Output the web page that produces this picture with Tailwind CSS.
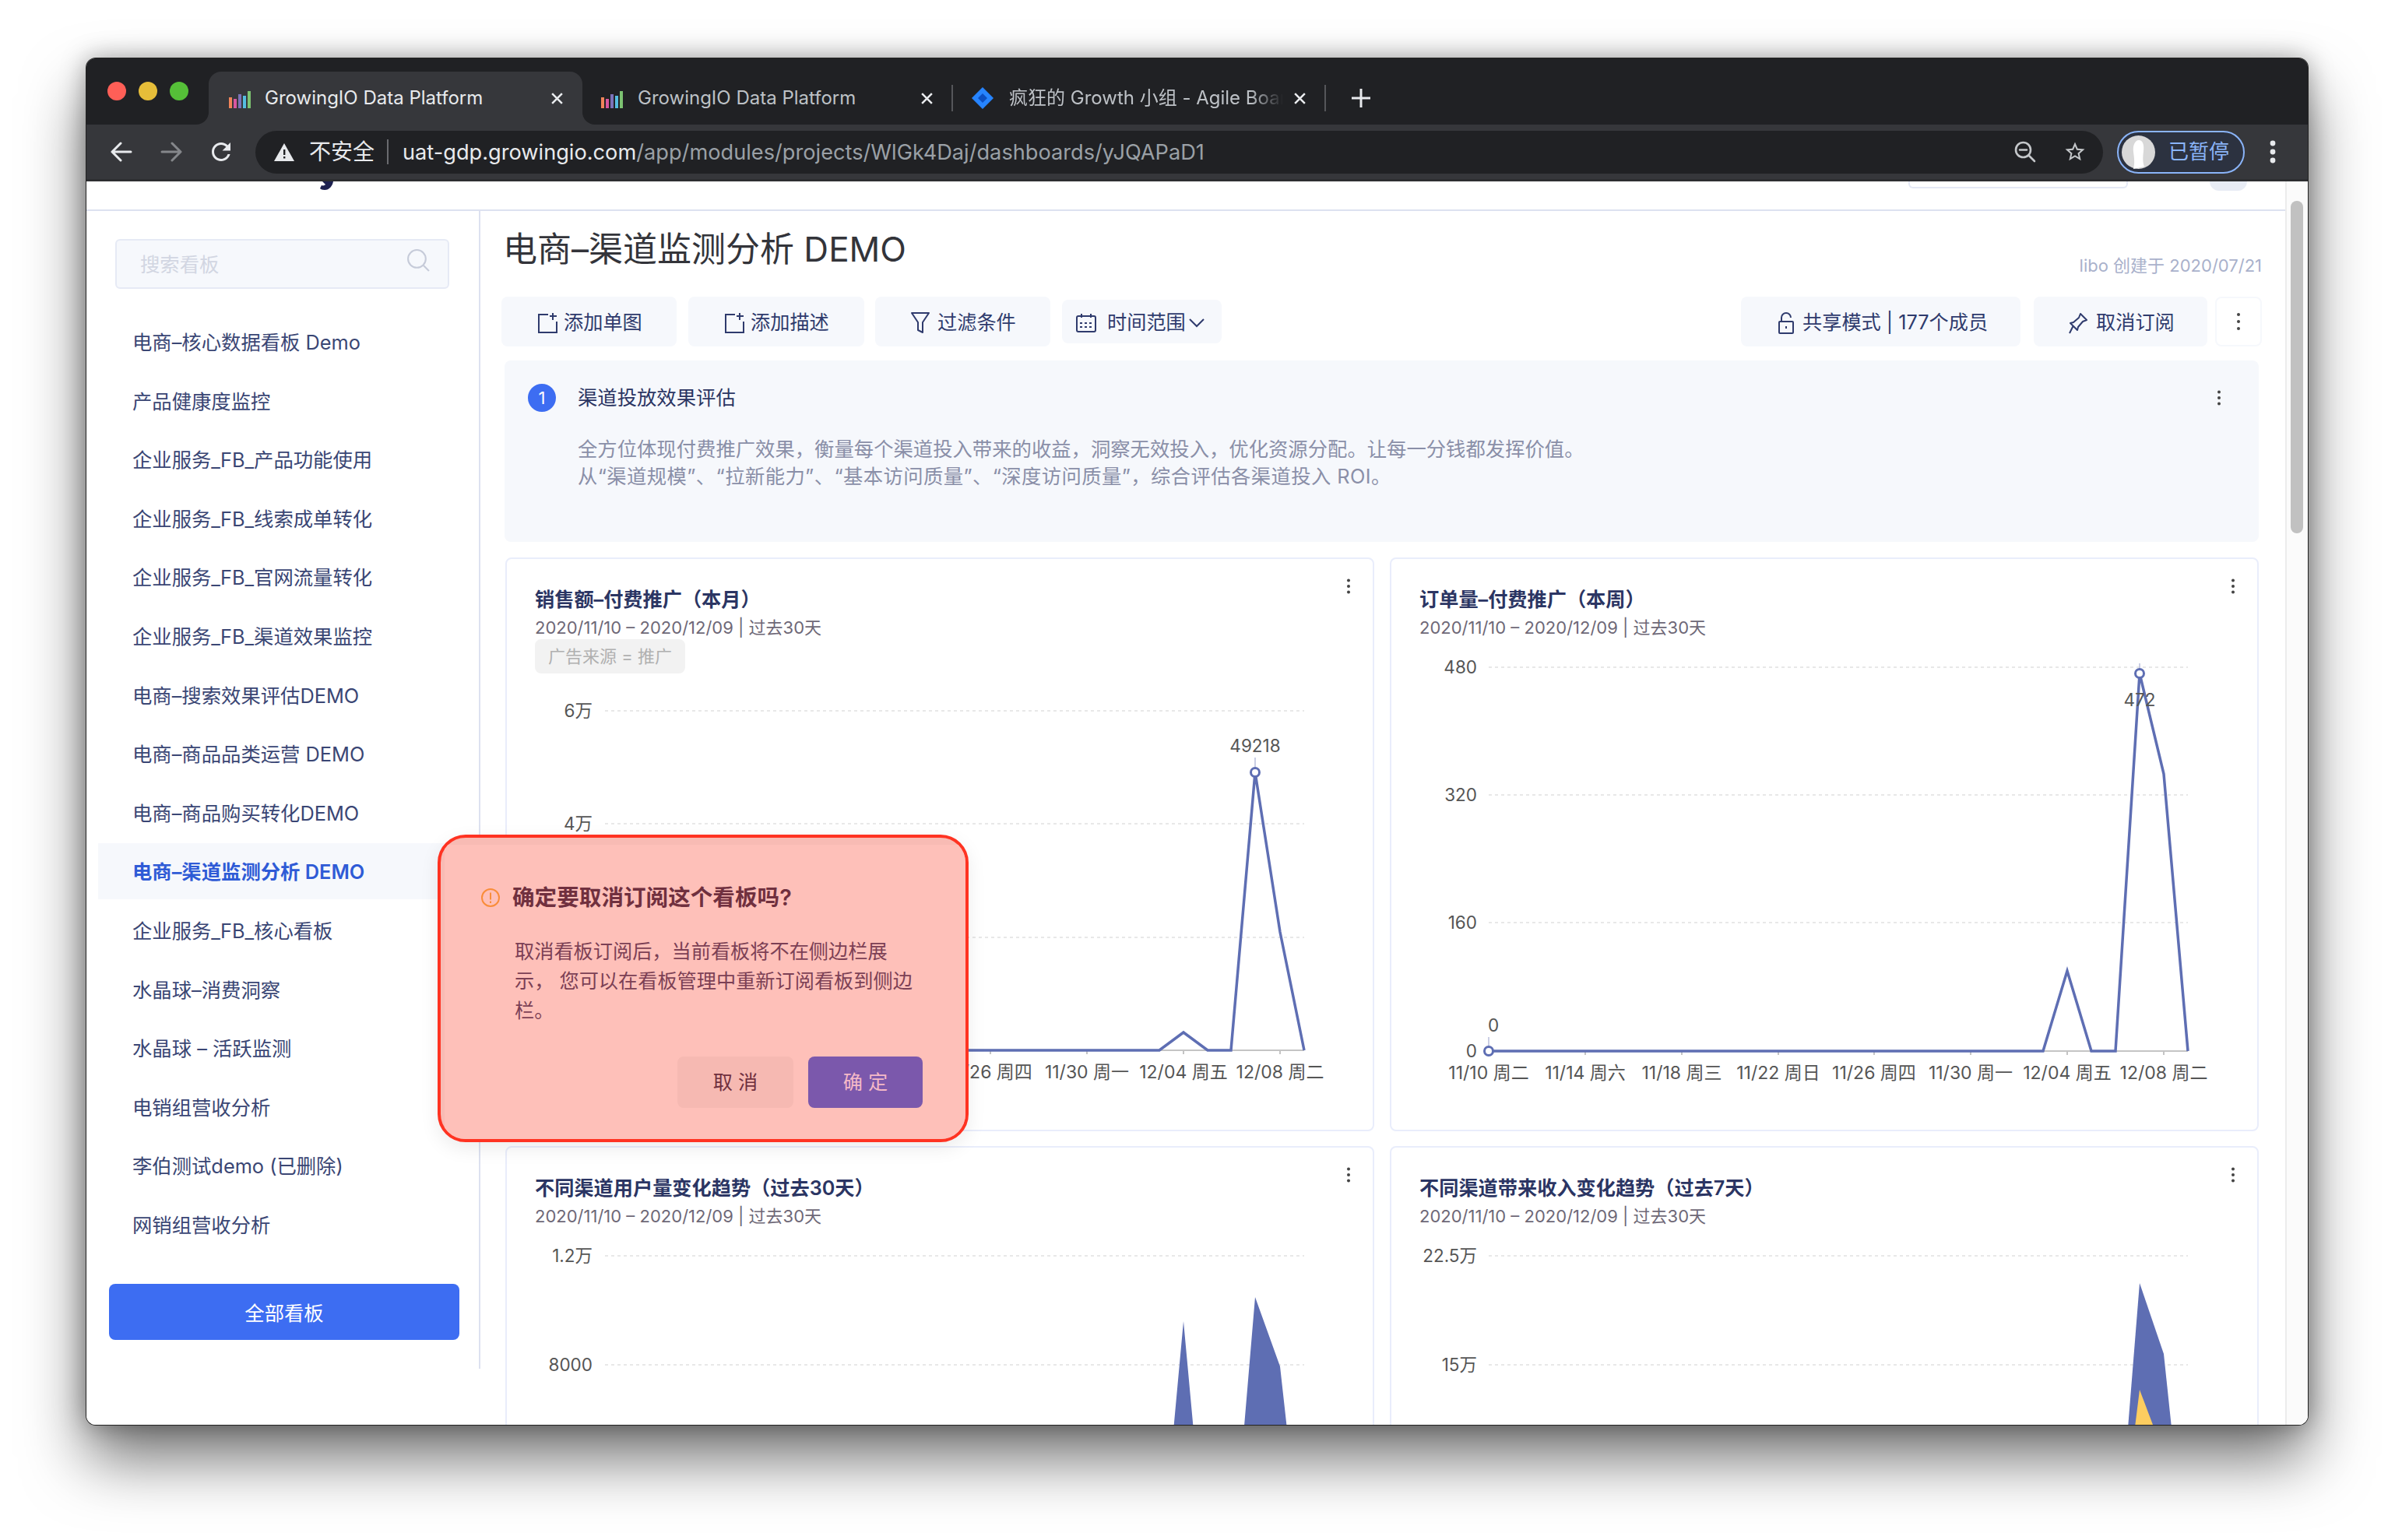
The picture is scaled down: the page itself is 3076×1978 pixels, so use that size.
<!DOCTYPE html>
<html lang="zh-CN">
<head>
  <meta charset="UTF-8">
  <title>GrowingIO Data Platform</title>
  <script src="https://cdn.jsdelivr.net/npm/@tailwindcss/browser@4"></script>
</head>
<body class="bg-white font-['Inter','Noto_Sans_CJK_SC',sans-serif] pt-[75px] pl-[111px] h-[1978px] overflow-hidden">

  <!-- browser window -->
  <div class="relative w-[2853px] h-[1755px] rounded-[12px] flex flex-col shadow-[0_0_0_1px_#222,0_0_32px_rgba(0,0,0,0.35),0_44px_80px_rgba(0,0,0,0.55)]">

    <!-- tab strip -->
    <div class="flex h-[85px] bg-[#36373b] rounded-t-[12px] overflow-hidden">
      <div class="w-[157px] bg-[#202124] rounded-br-[16px] flex items-center gap-[16px] pl-[27px] pb-[2px]">
        <span class="w-[24px] h-[24px] rounded-full bg-[#ff5f57]"></span>
        <span class="w-[24px] h-[24px] rounded-full bg-[#e6bd39]"></span>
        <span class="w-[24px] h-[24px] rounded-full bg-[#55bf38]"></span>
      </div>
      <div class="w-[480px] bg-[#202124] pt-[17px]">
        <div class="h-[68px] bg-[#36373b] rounded-t-[16px] flex items-center pl-[26px] pr-[24px] text-[#e8eaed]">
          <svg class="w-[28px] h-[22px] mt-[4px]" viewBox="0 0 28 22"><rect y="8" width="4" height="14" fill="#f0845a"/><rect x="6" y="10" width="4" height="12" fill="#d9569f"/><rect x="12" y="4" width="4" height="18" fill="#7c72b8"/><rect x="18" y="6" width="4" height="16" fill="#55bde0"/><rect x="24" width="4" height="22" fill="#7cc271"/></svg>
          <span class="ml-[18px] flex-1 text-[24px] leading-none">GrowingIO Data Platform</span>
          <svg class="w-[17px] h-[17px]" viewBox="0 0 16 16" stroke="#e8eaed" stroke-width="2.4"><path d="M2 2l12 12M14 2L2 14"/></svg>
        </div>
      </div>
      <div class="flex-1 bg-[#202124] rounded-bl-[16px] pt-[17px] flex items-center text-[#bdc1c6]">
        <div class="w-[476px] flex items-center pl-[24px] pr-[23px] border-r-2 border-[#55565a] h-[34px]">
          <svg class="w-[28px] h-[22px] mt-[4px]" viewBox="0 0 28 22"><rect y="8" width="4" height="14" fill="#f0845a"/><rect x="6" y="10" width="4" height="12" fill="#d9569f"/><rect x="12" y="4" width="4" height="18" fill="#7c72b8"/><rect x="18" y="6" width="4" height="16" fill="#55bde0"/><rect x="24" width="4" height="22" fill="#7cc271"/></svg>
          <span class="ml-[19px] flex-1 text-[24px] leading-none">GrowingIO Data Platform</span>
          <svg class="w-[17px] h-[17px]" viewBox="0 0 16 16" stroke="#e8eaed" stroke-width="2.4"><path d="M2 2l12 12M14 2L2 14"/></svg>
        </div>
        <div class="w-[479px] flex items-center pl-[23px] pr-[23px] border-r-2 border-[#55565a] h-[34px]">
          <svg class="w-[30px] h-[30px]" viewBox="0 0 30 30"><path d="M15 1L29 15 15 29 1 15z" fill="#2684ff"/><path d="M15 9l6 6-6 6-6-6z" fill="#0b4fc2"/></svg>
          <span class="ml-[19px] w-[352px] whitespace-nowrap overflow-hidden text-[24px] leading-[30px] [mask-image:linear-gradient(to_right,#000_88%,transparent)]">疯狂的 Growth 小组 - Agile Board - Jira</span>
          <span class="flex-1"></span>
          <svg class="w-[17px] h-[17px]" viewBox="0 0 16 16" stroke="#e8eaed" stroke-width="2.4"><path d="M2 2l12 12M14 2L2 14"/></svg>
        </div>
        <svg class="ml-[33px] w-[24px] h-[24px]" viewBox="0 0 24 24" stroke="#e8eaed" stroke-width="3"><path d="M12 0v24M0 12h24"/></svg>
      </div>
    </div>

    <!-- toolbar -->
    <div class="h-[73px] bg-[#36373b] border-b-[3px] border-[#2d2e31] flex items-center">
      <svg class="ml-[31px] w-[28px] h-[26px]" viewBox="0 0 28 26" fill="none" stroke="#e8eaed" stroke-width="3" stroke-linecap="round" stroke-linejoin="round"><path d="M26 13H2M13 2L2 13l11 11"/></svg>
      <svg class="ml-[36px] w-[28px] h-[26px]" viewBox="0 0 28 26" fill="none" stroke="#85878b" stroke-width="3" stroke-linecap="round" stroke-linejoin="round"><path d="M2 13h24M15 2l11 11-11 11"/></svg>
      <svg class="ml-[32px] w-[36px] h-[36px]" viewBox="0 0 24 24" fill="#e8eaed"><path d="M17.65 6.35C16.2 4.9 14.21 4 12 4c-4.42 0-7.99 3.58-7.99 8s3.57 8 7.99 8c3.73 0 6.84-2.55 7.73-6h-2.08c-.82 2.33-3.04 4-5.65 4-3.31 0-6-2.69-6-6s2.69-6 6-6c1.66 0 3.14.69 4.22 1.78L13 11h7V4l-2.35 2.35z"/></svg>
      <div class="ml-[26px] w-[2373px] h-[55px] rounded-full bg-[#202124] flex items-center pl-[24px] pr-[21px]">
        <svg class="w-[26px] h-[23px]" viewBox="0 0 26 23"><path d="M13 0l13 23H0z" fill="#e8eaed"/><path d="M12 8h2.4v7H12zM12 17h2.4v2.6H12z" fill="#202124"/></svg>
        <span class="ml-[19px] text-[28px] leading-none text-[#e8eaed]">不安全</span>
        <span class="ml-[16px] w-[2px] h-[32px] bg-[#6a6b6f]"></span>
        <span class="ml-[18px] pt-[2px] text-[27.2px] leading-none text-[#e8eaed] whitespace-nowrap">uat-gdp.growingio.com<span class="text-[#9aa0a6]">/app/modules/projects/WlGk4Daj/dashboards/yJQAPaD1</span></span>
        <span class="flex-1"></span>
        <svg class="w-[28px] h-[28px]" viewBox="0 0 28 28" fill="none" stroke="#c4c7ca" stroke-width="2.6" stroke-linecap="round"><circle cx="11.5" cy="11.5" r="9.5"/><path d="M18.5 18.5L26 26M7 11.5h9"/></svg>
        <svg class="ml-[35px] w-[30px] h-[30px]" viewBox="0 0 24 24" fill="#c4c7ca"><path d="M22 9.24l-7.19-.62L12 2 9.19 8.63 2 9.24l5.46 4.73L5.82 21 12 17.27 18.18 21l-1.63-7.03L22 9.24zM12 15.4l-3.76 2.27 1-4.28-3.32-2.88 4.38-.38L12 6.1l1.71 4.04 4.38.38-3.32 2.88 1 4.28L12 15.4z"/></svg>
      </div>
      <div class="ml-[18px] w-[164px] h-[55px] rounded-full border-2 border-[#8ab4f8] bg-[#2c3240] flex items-center pl-[4px]">
        <svg class="w-[43px] h-[43px]" viewBox="0 0 43 43"><circle cx="21.5" cy="21.5" r="21.5" fill="#d8d8d8"/><path d="M15 43c2-8 1-14 0-22-1-8 2-15 7-15s7 6 6 14c-1 8-1 15 1 20z" fill="#fff"/></svg>
        <span class="ml-[17px] text-[26px] leading-none text-[#8ab4f8]">已暂停</span>
      </div>
      <svg class="ml-[32px] w-[8px] h-[30px]" viewBox="0 0 8 30" fill="#e8eaed"><circle cx="4" cy="4" r="3.4"/><circle cx="4" cy="15" r="3.4"/><circle cx="4" cy="26" r="3.4"/></svg>
    </div>

    <!-- page -->
    <div class="flex-1 flex min-h-0 bg-white rounded-b-[12px] overflow-hidden">
      <div class="flex-1 flex flex-col min-w-0">

        <!-- what is left of the scrolled header -->
        <div class="h-[38px] border-b-2 border-[#dde1f0] flex items-start shrink-0">
          <svg class="ml-[298px] w-[20px] h-[11px]" viewBox="0 0 20 11"><path d="M5 0h14c-1 6-5 11-11 11-3 0-5-1-6-2l2-4c2 1 4 0 5-1z" fill="#1d2150"/></svg>
          <div class="ml-[2022px] w-[282px] h-[9px] border-2 border-t-0 border-[#e4e8f5] rounded-b-[6px]"></div>
          <div class="ml-[105px] w-[48px] h-[12px] rounded-b-full bg-[#e8ecf5]"></div>
        </div>

        <div class="flex-1 flex min-h-0">
          <!-- sidebar -->
          <aside class="w-[506px] h-[1487px] shrink-0 border-r-2 border-[#dde1f0] flex flex-col">
            <div class="mt-[36px] ml-[37px] w-[429px] h-[64px] rounded-[6px] border-2 border-[#e6eaf5] bg-[#f6f8fc] flex items-center pl-[30px] pr-[22px] justify-between">
              <span class="text-[25.35px] pt-[3px] text-[#d2d6e2]">搜索看板</span>
              <svg class="w-[31px] h-[31px] mb-[10px]" viewBox="0 0 30 30" fill="none" stroke="#c6cbd9" stroke-width="2"><circle cx="13" cy="13" r="11"/><path d="M21 21l7 7"/></svg>
            </div>
            <nav class="mt-[32px] ml-[15px] flex flex-col gap-[3.6px] text-[25.35px] text-[#3a4674]">
              <a class="h-[72px] pl-[44px] pt-[2px] flex items-center">电商–核心数据看板 Demo</a>
              <a class="h-[72px] pl-[44px] pt-[2px] flex items-center">产品健康度监控</a>
              <a class="h-[72px] pl-[44px] pt-[2px] flex items-center">企业服务_FB_产品功能使用</a>
              <a class="h-[72px] pl-[44px] pt-[2px] flex items-center">企业服务_FB_线索成单转化</a>
              <a class="h-[72px] pl-[44px] pt-[2px] flex items-center">企业服务_FB_官网流量转化</a>
              <a class="h-[72px] pl-[44px] pt-[2px] flex items-center">企业服务_FB_渠道效果监控</a>
              <a class="h-[72px] pl-[44px] pt-[2px] flex items-center">电商–搜索效果评估DEMO</a>
              <a class="h-[72px] pl-[44px] pt-[2px] flex items-center">电商–商品品类运营 DEMO</a>
              <a class="h-[72px] pl-[44px] pt-[2px] flex items-center">电商–商品购买转化DEMO</a>
              <a class="h-[72px] pl-[44px] pt-[2px] flex items-center bg-[#f6f8fc] font-semibold text-[#2f5bd6]">电商–渠道监测分析 DEMO</a>
              <a class="h-[72px] pl-[44px] pt-[2px] flex items-center">企业服务_FB_核心看板</a>
              <a class="h-[72px] pl-[44px] pt-[2px] flex items-center">水晶球–消费洞察</a>
              <a class="h-[72px] pl-[44px] pt-[2px] flex items-center">水晶球 – 活跃监测</a>
              <a class="h-[72px] pl-[44px] pt-[2px] flex items-center">电销组营收分析</a>
              <a class="h-[72px] pl-[44px] pt-[2px] flex items-center">李伯测试demo (已删除)</a>
              <a class="h-[72px] pl-[44px] pt-[2px] flex items-center">网销组营收分析</a>
            </nav>
            <button class="mt-[40px] ml-[29px] w-[450px] h-[72px] rounded-[8px] bg-[#3d6df2] text-white text-[25.35px] pt-[4px]">全部看板</button>
          </aside>

          <!-- main -->
          <main class="flex-1 min-w-0 pl-[27px] pr-[30px] overflow-hidden">
            <div class="h-[60px] mt-[19px] ml-[2px] flex justify-between items-end">
              <h1 class="text-[44px] leading-[60px] text-[#33343a]">电商–渠道监测分析 DEMO</h1>
              <span class="text-[22px] leading-[30px] -mb-[6px] text-[#a9b1cb]">libo 创建于 2020/07/21</span>
            </div>

            <!-- toolbar buttons -->
            <div class="mt-[31px] flex items-center text-[25.2px] text-[#2f3b6d]">
              <button class="w-[225px] h-[64px] rounded-[8px] bg-[#f6f8fc] flex items-center pl-[46px] pt-[3px]">
                <svg class="w-[26px] h-[27px] mr-[8px]" viewBox="0 0 26 27" fill="none" stroke="#2f3b6d" stroke-width="2"><path d="M14 3H2v23h23V12M20 1v9M16 5h9"/></svg>添加单图</button>
              <button class="ml-[15px] w-[226px] h-[64px] rounded-[8px] bg-[#f6f8fc] flex items-center pl-[46px] pt-[3px]">
                <svg class="w-[26px] h-[27px] mr-[8px]" viewBox="0 0 26 27" fill="none" stroke="#2f3b6d" stroke-width="2"><path d="M14 3H2v23h23V12M20 1v9M16 5h9"/></svg>添加描述</button>
              <button class="ml-[14px] w-[225px] h-[64px] rounded-[8px] bg-[#f6f8fc] flex items-center pl-[46px] pt-[3px]">
                <svg class="w-[24px] h-[27px] mr-[10px]" viewBox="0 0 24 27" fill="none" stroke="#2f3b6d" stroke-width="2" stroke-linejoin="round"><path d="M1 1h22l-8 12v13l-6-3V13z"/></svg>过滤条件</button>
              <button class="ml-[15px] w-[205px] h-[56px] rounded-[8px] bg-[#f6f8fc] flex items-center pl-[18px] pt-[3px]">
                <svg class="w-[26px] h-[24px] mr-[14px]" viewBox="0 0 26 24" fill="none" stroke="#2f3b6d" stroke-width="2"><rect x="1" y="3" width="24" height="20" rx="2"/><path d="M7 0v5M19 0v5"/><path d="M5 12h16M5 17h16" stroke-dasharray="3 3"/></svg>时间范围
                <svg class="ml-[4px] w-[20px] h-[12px]" viewBox="0 0 20 12" fill="none" stroke="#2f3b6d" stroke-width="2"><path d="M1 1l9 9 9-9"/></svg></button>
              <span class="flex-1"></span>
              <button class="w-[359px] h-[64px] rounded-[8px] bg-[#f6f8fc] flex items-center pl-[47px] pt-[3px]">
                <svg class="w-[22px] h-[28px] mr-[10px]" viewBox="0 0 22 28" fill="none" stroke="#2f3b6d" stroke-width="2"><rect x="2" y="12" width="18" height="15" rx="1"/><path d="M5 12V7a6 6 0 0 1 12 0M11 18v3"/></svg>共享模式 | 177个成员</button>
              <button class="ml-[17px] w-[223px] h-[64px] rounded-[8px] bg-[#f6f8fc] flex items-center pl-[44px] pt-[3px]">
                <svg class="w-[26px] h-[28px] mr-[10px]" viewBox="0 0 26 28" fill="none" stroke="#2f3b6d" stroke-width="2" stroke-linejoin="round"><path d="M16 2l8 8-5 2-6 7-1 4-9-9 4-1 7-6zM7 17l-5 10"/></svg>取消订阅</button>
              <button class="ml-[10px] w-[60px] h-[64px] rounded-[8px] border-2 border-[#f6f8fc] flex items-center justify-center">
                <svg class="w-[6px] h-[24px]" viewBox="0 0 6 24" fill="#444"><circle cx="3" cy="3" r="2"/><circle cx="3" cy="12" r="2"/><circle cx="3" cy="21" r="2"/></svg></button>
            </div>

            <!-- description panel -->
            <section class="mt-[18px] ml-[4px] mr-[4px] h-[233px] rounded-[8px] bg-[#f6f8fc] pt-[30px] pl-[30px] pr-[48px]">
              <div class="flex items-center h-[36px]">
                <span class="w-[36px] h-[36px] rounded-full bg-[#3d6df2] text-white text-[22px] flex items-center justify-center">1</span>
                <span class="ml-[28px] text-[25.35px] text-[#2b3563]">渠道投放效果评估</span>
                <span class="flex-1"></span>
                <svg class="w-[6px] h-[20px]" viewBox="0 0 6 20" fill="#444"><circle cx="3" cy="2.5" r="2"/><circle cx="3" cy="10" r="2"/><circle cx="3" cy="17.5" r="2"/></svg>
              </div>
              <p class="mt-[30px] ml-[64px] text-[25.35px] leading-[35px] text-[#8a8fa8]">全方位体现付费推广效果，衡量每个渠道投入带来的收益，洞察无效投入，优化资源分配。让每一分钱都发挥价值。<br><span class="tracking-[0.4px]">从“渠道规模”、“拉新能力”、“基本访问质量”、“深度访问质量”，综合评估各渠道投入 ROI。</span></p>
            </section>

            <!-- charts -->
            <div class="mt-[20px] ml-[5px] mr-[4px] grid grid-cols-[1116px_1116px] gap-x-[20px] gap-y-[19px]">

              <div class="h-[737px] rounded-[8px] border-2 border-[#e9edfb] overflow-hidden">
                <div class="h-[152px] flex justify-between pl-[36px] pr-[28px]">
                  <div class="pt-[34px]">
                    <h3 class="text-[25.2px] leading-[36px] font-semibold text-[#2b3563]">销售额–付费推广（本月）</h3>
                    <p class="mt-[3px] text-[22px] leading-[30px] text-[#6e6877]">2020/11/10 – 2020/12/09 | 过去30天</p>
                    <span class="inline-block h-[44px] w-[193px] rounded-[8px] bg-[#f2f2f2] text-center text-[22px] leading-[44px] text-[#b0b0b0]">广告来源 = 推广</span>
                  </div>
                  <svg class="mt-[25px] w-[6px] h-[20px]" viewBox="0 0 6 20" fill="#444"><circle cx="3" cy="2.5" r="2"/><circle cx="3" cy="10" r="2"/><circle cx="3" cy="17.5" r="2"/></svg>
                </div>
                <svg class="w-[1112px] h-[581px]" viewBox="651 870 1112 581">
                  <g stroke="#e8e8e8" stroke-width="2" stroke-dasharray="4 4"><path d="M777 913H1675M777 1058H1675M777 1204H1675"/></g>
                  <g class="text-[22.5px] fill-[#555]" text-anchor="end" dominant-baseline="middle" transform="translate(0 2)"><text x="761" y="913">6万</text><text x="761" y="1058">4万</text><text x="761" y="1204">2万</text><text x="761" y="1349">0</text></g>
                  <path d="M777 1349H1675M1025 1349v5M1149 1349v5M1272 1349v5M1396 1349v5M1520 1349v5M1644 1349v5" stroke="#c4c4c4" stroke-width="2" fill="none"/>
                  <g class="text-[23px] fill-[#555]" text-anchor="middle" dominant-baseline="middle" transform="translate(0 2)"><text x="777" y="1377">11/10 周二</text><text x="901" y="1377">11/14 周六</text><text x="1025" y="1377">11/18 周三</text><text x="1149" y="1377">11/22 周日</text><text x="1272" y="1377">11/26 周四</text><text x="1396" y="1377">11/30 周一</text><text x="1520" y="1377">12/04 周五</text><text x="1644" y="1377">12/08 周二</text></g>
                  <path d="M777 1349H1489L1520 1326 1551 1349H1581L1612 992 1644 1197 1675 1349" fill="none" stroke="#5e6eb3" stroke-width="3.5"/>
                  <path d="M1612 973v13" stroke="#b9bedb" stroke-width="1.5"/>
                  <circle cx="1612" cy="992" r="5.5" fill="#fff" stroke="#5e6eb3" stroke-width="3"/>
                  <text class="text-[22.5px] fill-[#555]" x="1612" y="960" text-anchor="middle" dominant-baseline="middle">49218</text>
                </svg>
              </div>

              <div class="h-[737px] rounded-[8px] border-2 border-[#e9edfb] overflow-hidden">
                <div class="h-[152px] flex justify-between pl-[36px] pr-[28px]">
                  <div class="pt-[34px]">
                    <h3 class="text-[25.2px] leading-[36px] font-semibold text-[#2b3563]">订单量–付费推广（本周）</h3>
                    <p class="mt-[3px] text-[22px] leading-[30px] text-[#6e6877]">2020/11/10 – 2020/12/09 | 过去30天</p>
                  </div>
                  <svg class="mt-[25px] w-[6px] h-[20px]" viewBox="0 0 6 20" fill="#444"><circle cx="3" cy="2.5" r="2"/><circle cx="3" cy="10" r="2"/><circle cx="3" cy="17.5" r="2"/></svg>
                </div>
                <svg class="w-[1112px] h-[581px] overflow-visible" viewBox="1787 870 1112 581">
                  <g stroke="#e8e8e8" stroke-width="2" stroke-dasharray="4 4"><path d="M1912 857H2810M1912 1021H2810M1912 1185H2810"/></g>
                  <g class="text-[22.5px] fill-[#555]" text-anchor="end" dominant-baseline="middle" transform="translate(0 2)"><text x="1897" y="857">480</text><text x="1897" y="1021">320</text><text x="1897" y="1185">160</text><text x="1897" y="1350">0</text></g>
                  <path d="M1912 1350H2810M2036 1350v5M2160 1350v5M2284 1350v5M2407 1350v5M2531 1350v5M2655 1350v5M2779 1350v5" stroke="#c4c4c4" stroke-width="2" fill="none"/>
                  <g class="text-[23px] fill-[#555]" text-anchor="middle" dominant-baseline="middle" transform="translate(0 2)"><text x="1912" y="1378">11/10 周二</text><text x="2036" y="1378">11/14 周六</text><text x="2160" y="1378">11/18 周三</text><text x="2284" y="1378">11/22 周日</text><text x="2407" y="1378">11/26 周四</text><text x="2531" y="1378">11/30 周一</text><text x="2655" y="1378">12/04 周五</text><text x="2779" y="1378">12/08 周二</text></g>
                  <path d="M1912 1350H2624L2655 1247 2686 1350H2717L2748 865 2779 994 2810 1350" fill="none" stroke="#5e6eb3" stroke-width="3.5"/>
                  <path d="M1912 1332v12M2748 852v8" stroke="#b9bedb" stroke-width="1.5"/>
                  <circle cx="1912" cy="1350" r="5.5" fill="#fff" stroke="#5e6eb3" stroke-width="3"/>
                  <circle cx="2748" cy="865" r="5.5" fill="#fff" stroke="#5e6eb3" stroke-width="3"/>
                  <text class="text-[22.5px] fill-[#555]" x="2748" y="901" text-anchor="middle" dominant-baseline="middle">472</text>
                  <text class="text-[22.5px] fill-[#555]" x="1918" y="1319" text-anchor="middle" dominant-baseline="middle">0</text>
                </svg>
              </div>

              <div class="h-[737px] rounded-[8px] border-2 border-[#e9edfb] overflow-hidden">
                <div class="h-[116px] flex justify-between pl-[36px] pr-[28px]">
                  <div class="pt-[34px]">
                    <h3 class="text-[25.2px] leading-[36px] font-semibold text-[#2b3563]">不同渠道用户量变化趋势（过去30天）</h3>
                    <p class="mt-[3px] text-[22px] leading-[30px] text-[#6e6877]">2020/11/10 – 2020/12/09 | 过去30天</p>
                  </div>
                  <svg class="mt-[25px] w-[6px] h-[20px]" viewBox="0 0 6 20" fill="#444"><circle cx="3" cy="2.5" r="2"/><circle cx="3" cy="10" r="2"/><circle cx="3" cy="17.5" r="2"/></svg>
                </div>
                <svg class="w-[1112px] h-[450px]" viewBox="651 1590 1112 450">
                  <g stroke="#e8e8e8" stroke-width="2" stroke-dasharray="4 4"><path d="M777 1613H1675M777 1753H1675M777 1893H1675"/></g>
                  <g class="text-[22.5px] fill-[#555]" text-anchor="end" dominant-baseline="middle" transform="translate(0 2)"><text x="761" y="1613">1.2万</text><text x="761" y="1753">8000</text></g>
                  <path d="M1489 2033L1520 1697 1551 2033ZM1581 2033L1612 1666 1644 1755 1675 2033Z" fill="#5e6eb3"/>
                </svg>
              </div>

              <div class="h-[737px] rounded-[8px] border-2 border-[#e9edfb] overflow-hidden">
                <div class="h-[116px] flex justify-between pl-[36px] pr-[28px]">
                  <div class="pt-[34px]">
                    <h3 class="text-[25.2px] leading-[36px] font-semibold text-[#2b3563]">不同渠道带来收入变化趋势（过去7天）</h3>
                    <p class="mt-[3px] text-[22px] leading-[30px] text-[#6e6877]">2020/11/10 – 2020/12/09 | 过去30天</p>
                  </div>
                  <svg class="mt-[25px] w-[6px] h-[20px]" viewBox="0 0 6 20" fill="#444"><circle cx="3" cy="2.5" r="2"/><circle cx="3" cy="10" r="2"/><circle cx="3" cy="17.5" r="2"/></svg>
                </div>
                <svg class="w-[1112px] h-[450px]" viewBox="1787 1590 1112 450">
                  <g stroke="#e8e8e8" stroke-width="2" stroke-dasharray="4 4"><path d="M1912 1613H2810M1912 1753H2810"/></g>
                  <g class="text-[22.5px] fill-[#555]" text-anchor="end" dominant-baseline="middle" transform="translate(0 2)"><text x="1897" y="1613">22.5万</text><text x="1897" y="1753">15万</text></g>
                  <path d="M2717 2033L2748 1648 2779 1739 2810 2033Z" fill="#5e6eb3"/>
                  <path d="M2717 2033L2748 1785 2779 1867 2810 2033Z" fill="#fdcd60"/>
                </svg>
              </div>
            </div>
          </main>
        </div>
      </div>

      <!-- scrollbar -->
      <div class="w-[29px] shrink-0 bg-[#fbfbfb] border-l-2 border-[#ececec] pt-[25px] pl-[5px]">
        <div class="w-[16px] h-[427px] rounded-full bg-[#c1c1c1]"></div>
      </div>
    </div>

    <!-- confirm dialog, over the page -->
    <div class="absolute left-[451px] top-[997px] w-[682px] h-[395px] rounded-[36px] border-4 border-[#ff3322] bg-[#f8bbb4] overflow-hidden shadow-[0_8px_24px_rgba(0,0,0,0.08)]">
      <div class="ml-[5px] mt-[9px] h-full bg-[#fec0b9] pl-[47px] pr-[55px] pt-[48px]">
        <div class="flex items-center h-[40px]">
          <svg class="w-[24px] h-[24px]" viewBox="0 0 24 24" fill="none" stroke="#f98d3a" stroke-width="2"><circle cx="12" cy="12" r="11"/><path d="M12 5.5v9M12 16.5v2.5"/></svg>
          <h2 class="ml-[16px] text-[28.6px] font-semibold text-[#70303f]">确定要取消订阅这个看板吗?</h2>
        </div>
        <p class="mt-[30px] ml-[43px] text-[25.2px] leading-[38px] text-[#7c4055]">取消看板订阅后，当前看板将不在侧边栏展<br>示， 您可以在看板管理中重新订阅看板到侧边<br>栏。</p>
        <div class="mt-[40px] flex justify-end gap-[19px]">
          <button class="w-[149px] h-[66px] rounded-[8px] bg-[#f6b9b2] text-[25.2px] pt-[2px] text-[#70303f]">取 消</button>
          <button class="w-[147px] h-[66px] rounded-[8px] bg-[#7b58ac] text-[25.2px] pt-[2px] text-[#f4b9c7]">确 定</button>
        </div>
      </div>
    </div>
  </div>
</body>
</html>
